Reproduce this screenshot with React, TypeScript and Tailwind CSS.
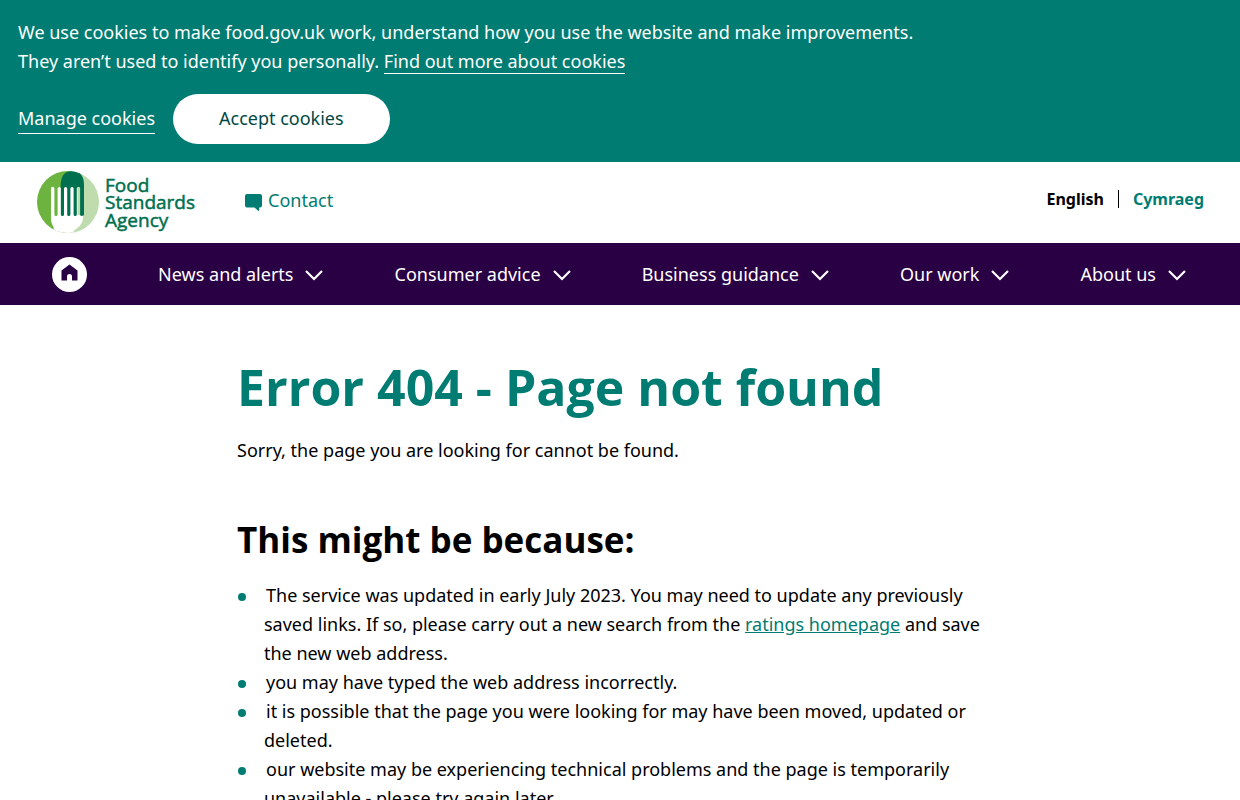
import type { ReactNode } from "react";

const navItems = [
  "News and alerts",
  "Consumer advice",
  "Business guidance",
  "Our work",
  "About us",
];

export default function App() {
  return (
    <div className="min-h-screen bg-white font-['Noto_Sans','Open_Sans',sans-serif] text-lg leading-[29px] text-black">
      <CookieBanner />
      <Header />
      <MainNav />
      <main className="mx-auto max-w-[802px] px-[18px] pt-[52px] pb-16">
        <h1 className="font-['Open_Sans',sans-serif] text-[50px] leading-[60px] font-bold text-[#007c72]">
          Error 404 - Page not found
        </h1>
        <p className="mt-[19px]">
          Sorry, the page you are looking for cannot be found.
        </p>
        <h2 className="mt-[51px] font-['Open_Sans',sans-serif] text-[35px] leading-[48px] font-bold">
          This might be because:
        </h2>
        <ul className="mt-[17px]">
          <Reason>
            The service was updated in early July 2023. You may need to update
            any previously saved links. If so, please carry out a new search
            from the{" "}
            <a href="#ratings" className="text-[#007c72] underline">
              ratings homepage
            </a>{" "}
            and save the new web address.
          </Reason>
          <Reason>you may have typed the web address incorrectly.</Reason>
          <Reason>
            it is possible that the page you were looking for may have been
            moved, updated or deleted.
          </Reason>
          <Reason>
            our website may be experiencing technical problems and the page is
            temporarily unavailable - please try again later.
          </Reason>
        </ul>
      </main>
    </div>
  );
}

function CookieBanner() {
  return (
    <section aria-label="Cookies" className="bg-[#007c72] p-[18px] text-white">
      <p>
        We use cookies to make food.gov.uk work, understand how you use the
        website and make improvements.
        <br />
        They aren’t used to identify you personally.{" "}
        <a href="#cookies" className="border-b border-white">
          Find out more about cookies
        </a>
      </p>
      <div className="mt-[18px] flex items-center gap-[18px]">
        <button type="button" className="border-b border-white">
          Manage cookies
        </button>
        <button
          type="button"
          className="h-[50px] rounded-full bg-white px-[46px] pb-0.5 text-[#004844]"
        >
          Accept cookies
        </button>
      </div>
    </section>
  );
}

function Header() {
  return (
    <header className="flex items-start justify-between px-9 pt-2 pb-[9px]">
      <div className="flex items-start gap-[49px]">
        <a href="#home" aria-label="Food Standards Agency">
          <Logo />
        </a>
        <a href="#contact" className="flex items-center gap-1.5 pt-4 text-[#007c72]">
          <svg viewBox="0 0 17 17" className="mt-1 size-[17px]" fill="currentColor" aria-hidden="true">
            <path d="M2 0h13a2 2 0 0 1 2 2v9.500a2 2 0 0 1-2 2h-.8V16a.8.8 0 0 1-1.400.6L9.500 13.500H2a2 2 0 0 1-2-2V2a2 2 0 0 1 2-2Z" />
          </svg>
          Contact
        </a>
      </div>
      <ul className="flex items-center gap-3.5 pt-[17px] text-base font-bold">
        <li>English</li>
        <li className="flex items-center gap-3.5">
          <span className="h-[18px] w-px bg-black" />
          <a href="#cymraeg" className="text-[#007c72]">
            Cymraeg
          </a>
        </li>
      </ul>
    </header>
  );
}

function MainNav() {
  return (
    <nav aria-label="Main" className="bg-[#2a0045] pr-[54px] pl-[52px] text-white">
      <ul className="flex h-[62px] items-center justify-between">
        <li>
          <a
            href="#home"
            aria-label="Home"
            className="grid size-[35px] place-items-center rounded-full bg-white text-[#2a0045]"
          >
            <svg viewBox="0 0 17 17" className="mb-1 size-[17px]" fill="currentColor" aria-hidden="true">
              <path d="M8.500.5 16.500 6.500v10H11V12.500a2.500 2.500 0 0 0-5 0v4H.5v-10Z" />
            </svg>
          </a>
        </li>
        {navItems.map((item) => (
          <li key={item}>
            <button type="button" className="flex items-center gap-3">
              {item}
              <svg
                viewBox="0 0 18 11"
                className="mt-0.5 h-[11px] w-[18px]"
                fill="none"
                stroke="currentColor"
                strokeWidth="2.200"
                aria-hidden="true"
              >
                <path d="m1 1 8 8 8-8" />
              </svg>
            </button>
          </li>
        ))}
      </ul>
    </nav>
  );
}

function Reason({ children }: { children: ReactNode }) {
  return (
    <li className="flex gap-[18px]">
      <span className="mt-3 ml-px size-2 shrink-0 rounded-full bg-[#007c72]" />
      <p className="indent-0.5">{children}</p>
    </li>
  );
}

function Logo() {
  return (
    <svg viewBox="0 0 160 64" className="h-16 w-40" role="img" aria-label="Food Standards Agency">
      <defs>
        <clipPath id="disc">
          <circle cx="32" cy="32" r="31" />
        </clipPath>
      </defs>
      <g clipPath="url(#disc)">
        <path d="M0 0h36v64H0Z" fill="#6cb33f" />
        <path d="M36 0h28v64H36Z" fill="#bfdcae" />
        <path d="M24.700 46V15Q25 1 36 1q12 0 12 14v29.500a1.800 1.800 0 0 1-3.600 0V46Z" fill="#00704f" />
        {/* fork: five tines over a handle that runs off the lower edge */}
        <path
          d="M15 18.500a1.700 1.700 0 0 1 3.400 0V44.500a1.600 1.600 0 0 0 3.200 0V18.500a1.600 1.600 0 0 1 3.200 0V44.500a1.600 1.600 0 0 0 3.200 0V18.500a1.600 1.600 0 0 1 3.200 0V44.500a1.600 1.600 0 0 0 3.200 0V18.500a1.600 1.600 0 0 1 3.200 0V44.500a1.600 1.600 0 0 0 3.200 0V18.500a1.600 1.600 0 0 1 3.200 0V44.500a1.600 1.600 0 0 0 3.200 0V46q0 8-6 12-4 3-5 6H17q2-6-1-10-1-2-1-6Z"
          fill="#fff"
        />
        <path d="M41.500 18.500a1.300 1.300 0 0 1 2.600 0V45h-2.600Z" fill="#bfdcae" />
      </g>
      <g
        fill="#00704f"
        stroke="#00704f"
        strokeWidth="0.500"
        className="font-['Open_Sans',sans-serif] text-[19px] font-normal"
      >
        <text x="69" y="22">Food</text>
        <text x="69" y="39">Standards</text>
        <text x="69" y="57">Agency</text>
      </g>
    </svg>
  );
}
